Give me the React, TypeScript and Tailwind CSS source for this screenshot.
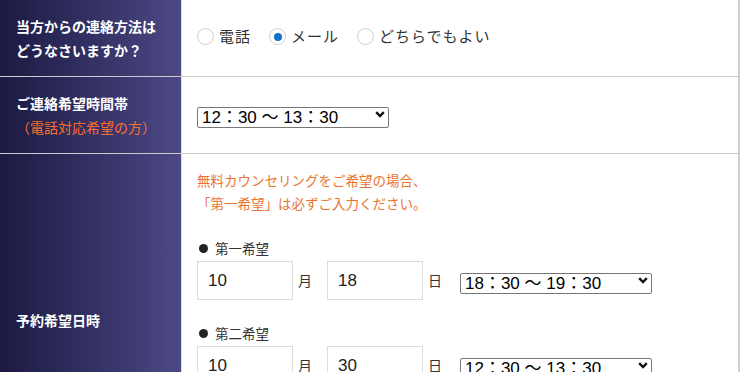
import { useState } from 'react';

const jp = "font-['Noto_Sans_CJK_JP','Noto_Sans',sans-serif]";
const num = "font-['Liberation_Sans','Noto_Sans_CJK_JP',sans-serif]";

const timeSlots = [
  '10：00 ～ 11：00',
  '11：00 ～ 12：00',
  '12：30 ～ 13：30',
  '14：00 ～ 15：00',
  '16：00 ～ 17：00',
  '18：30 ～ 19：30',
];

function TimeSelect({ value }: { value: string }) {
  const [v, setV] = useState(value);
  return (
    <div className="relative w-[192px] h-[21px] shrink-0">
      <select
        value={v}
        onChange={(e) => setV(e.target.value)}
        className={`appearance-none w-full h-full border border-[#767676] rounded-[2px] bg-white pl-[4px] text-[17px] leading-[19px] text-black ${num}`}
      >
        {timeSlots.map((t) => (
          <option key={t} value={t}>
            {t}
          </option>
        ))}
      </select>
      <svg
        className="pointer-events-none absolute right-[4px] top-[7px] w-[10px] h-[7px]"
        viewBox="0 0 10 7"
        fill="none"
      >
        <path d="M1.2 1.2L5 5L8.8 1.2" stroke="#111" strokeWidth={2.4} />
      </svg>
    </div>
  );
}

function Radio({ label, checked }: { label: string; checked?: boolean }) {
  return (
    <label className="flex items-center gap-[5px] mr-[18px]">
      <span className="w-[17px] h-[17px] rounded-full border border-[#cfcfcf] bg-white flex items-center justify-center">
        {checked && <span className="w-[8px] h-[8px] rounded-full bg-[#1170c7]" />}
      </span>
      <span className="text-[15px] tracking-[1px] text-[#333]">{label}</span>
    </label>
  );
}

function Choice({ title, month, day, time }: { title: string; month: string; day: string; time: string }) {
  return (
    <div className="mt-[23px]">
      <div className="flex items-center h-[20px] text-[13.5px] text-[#333]">
        <span className="w-[9px] h-[9px] rounded-full bg-[#222] ml-[2px] mr-[7px]" />
        {title}
      </div>
      <div className="flex items-center mt-[3px]">
        <input
          defaultValue={month}
          className={`w-[96px] h-[39px] border border-[#dcdcdc] px-[10px] text-[17px] text-[#222] ${num}`}
        />
        <span className="ml-[5px] mr-[15px] text-[14px] text-[#333]">月</span>
        <input
          defaultValue={day}
          className={`w-[96px] h-[39px] border border-[#dcdcdc] px-[10px] text-[17px] text-[#222] ${num}`}
        />
        <span className="ml-[5px] mr-[18px] text-[14px] text-[#333]">日</span>
        <TimeSelect value={time} />
      </div>
    </div>
  );
}

export default function App() {
  const th = 'w-[181px] shrink-0 bg-linear-to-r from-[#1c1a42] to-[#4c4986] flex items-center pl-4 text-white font-bold text-[14px] leading-[24px]';
  const td = 'flex-1 border-l border-[#dddddd] border-r-2 border-r-[#d0d0d0] pl-[15px] bg-white';

  return (
    <div className={`w-[740px] bg-white ${jp}`}>
      <div className="flex h-[77px] border-b border-[#cccccc]">
        <div className={th}>
          <div>
            当方からの連絡方法は
            <br />
            どうなさいますか？
          </div>
        </div>
        <div className={`${td} flex items-center pb-[3px]`}>
          <Radio label="電話" />
          <Radio label="メール" checked />
          <Radio label="どちらでもよい" />
        </div>
      </div>

      <div className="flex h-[77px] border-b border-[#cccccc]">
        <div className={th}>
          <div>
            ご連絡希望時間帯
            <br />
            <span className="font-normal text-[#ff6d2e]">（電話対応希望の方）</span>
          </div>
        </div>
        <div className={`${td} flex items-center pb-[1px]`}>
          <TimeSelect value="12：30 ～ 13：30" />
        </div>
      </div>

      <div className="flex border-b border-[#cccccc]">
        <div className={th}>予約希望日時</div>
        <div className={`${td} pt-[15px] pb-[15px]`}>
          <p className="text-[13.5px] leading-[23px] text-[#ea7330]">
            無料カウンセリングをご希望の場合、
            <br />
            「第一希望」は必ずご入力ください。
          </p>
          <Choice title="第一希望" month="10" day="18" time="18：30 ～ 19：30" />
          <Choice title="第二希望" month="10" day="30" time="12：30 ～ 13：30" />
          <Choice title="第三希望" month="" day="" time="10：00 ～ 11：00" />
        </div>
      </div>
    </div>
  );
}
